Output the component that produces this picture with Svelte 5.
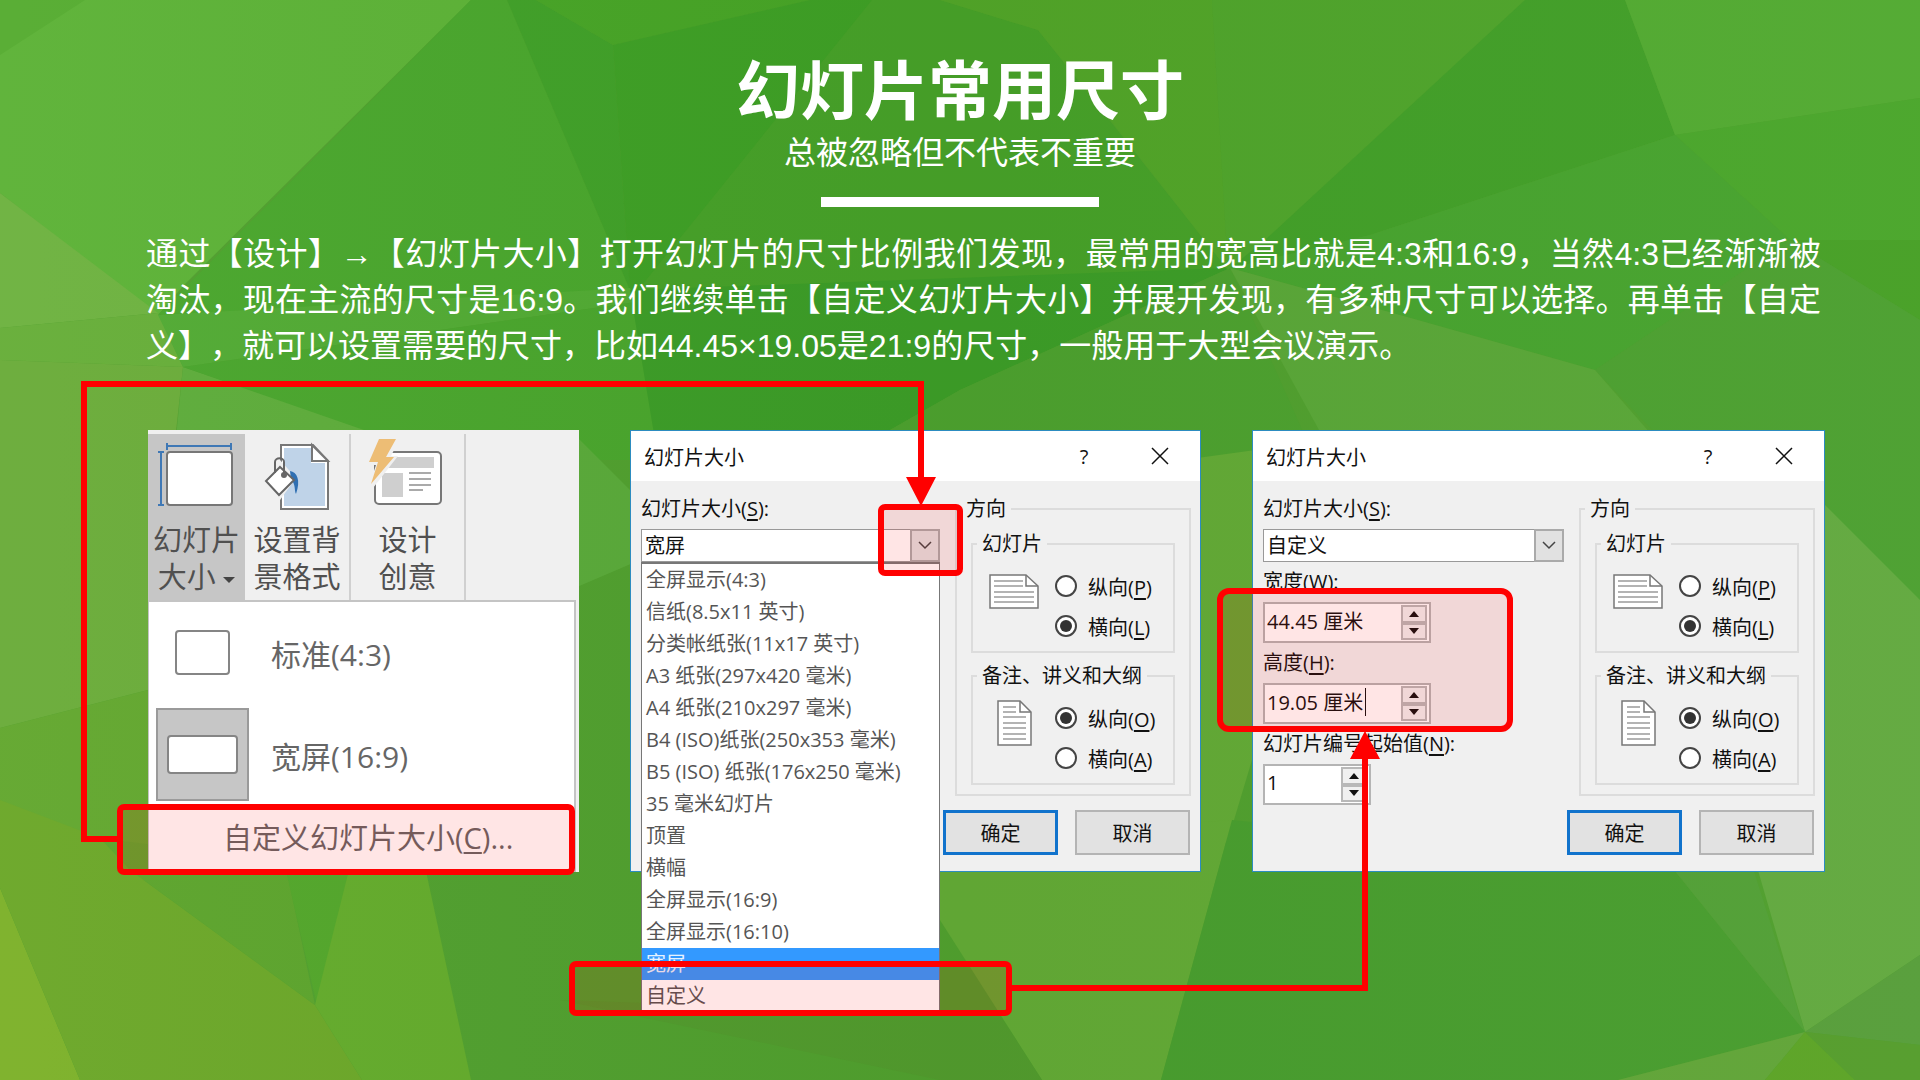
<script lang="ts">
	type Option = { name: string; text: string; key: string; checked: boolean };

	const title = '幻灯片大小';

	const sizes = [
		'全屏显示(4:3)',
		'信纸(8.5x11 英寸)',
		'分类帐纸张(11x17 英寸)',
		'A3 纸张(297x420 毫米)',
		'A4 纸张(210x297 毫米)',
		'B4 (ISO)纸张(250x353 毫米)',
		'B5 (ISO) 纸张(176x250 毫米)',
		'35 毫米幻灯片',
		'顶置',
		'横幅',
		'全屏显示(16:9)',
		'全屏显示(16:10)',
		'宽屏',
		'自定义'
	];

	const slideOptions: Option[] = [
		{ name: 'slide', text: '纵向', key: 'P', checked: false },
		{ name: 'slide', text: '横向', key: 'L', checked: true }
	];

	const notesOptions: Option[] = [
		{ name: 'notes', text: '纵向', key: 'O', checked: true },
		{ name: 'notes', text: '横向', key: 'A', checked: false }
	];

	// Low-poly backdrop, drawn in order
	const facets = [
		{ points: '0,0 471,0 184,285 158,315 0,193', fill: '#5cb236' },
		{ points: '0,0 85,0 0,55', fill: '#55ac30' },
		{ points: '0,193 158,313 0,328', fill: '#6db23f' },
		{ points: '0,328 158,313 183,367 0,360', fill: '#66ae38' },
		{ points: '0,360 183,367 148,690 0,728', fill: '#6aac39' },
		{ points: '0,728 148,690 160,880 0,888', fill: '#62a72e' },
		{ points: '183,367 400,440 430,720 148,720', fill: '#5dac3a' },
		{ points: '471,0 507,0 630,290 158,315', fill: '#49a62c' },
		{ points: '507,0 536,0 613,45 630,290', fill: '#40a028' },
		{ points: '536,0 810,0 613,45', fill: '#47a426' },
		{ points: '613,45 810,0 872,0 705,290 630,290', fill: '#3e9f25' },
		{ points: '872,0 940,0 1038,30 1228,270 630,300', fill: '#46a028' },
		{ points: '158,315 630,288 636,302 183,367', fill: '#51aa33' },
		{ points: '183,367 636,302 662,460 450,460', fill: '#49a52c' },
		{ points: '630,290 1230,268 960,390 820,470 660,470', fill: '#3c9c27' },
		{ points: '1230,268 960,390 820,470 1320,470', fill: '#4ca02e' },
		{ points: '940,0 1212,0 1228,270 1110,120 1038,30', fill: '#51a428' },
		{ points: '1212,0 1525,0 1265,240 1228,270', fill: '#4fa42b' },
		{ points: '1525,0 1625,0 1675,135 1370,235 1228,270 1265,240', fill: '#429f28' },
		{ points: '1625,0 1920,0 1920,98 1675,135', fill: '#52aa31' },
		{ points: '1675,135 1920,98 1920,240 1790,240', fill: '#4aa62b' },
		{ points: '1675,135 1790,240 1595,370 1400,315 1230,268 1370,235', fill: '#47a32e' },
		{ points: '1790,240 1920,240 1920,320', fill: '#47a026' },
		{ points: '1790,240 1920,320 1920,600 1700,480 1595,370', fill: '#4ca030' },
		{ points: '1230,268 1400,315 1595,370 1665,450 1330,450', fill: '#59a637' },
		{ points: '570,430 640,500 640,560 570,590', fill: '#59a939' },
		{ points: '1190,459 1270,448 1270,700 1228,840 1190,880', fill: '#62a935' },
		{ points: '1820,500 1920,600 1920,955 1805,1032 1755,860', fill: '#62a93f' },
		{ points: '0,888 80,1080 0,1080', fill: '#7cb129' },
		{ points: '0,800 100,838 130,870 315,1005 362,1080 80,1080 0,888', fill: '#6ba728' },
		{ points: '100,838 285,862 315,1005 130,870', fill: '#5ca42c' },
		{ points: '284,862 352,862 318,1010', fill: '#52a62a' },
		{ points: '351,862 424,862 471,1080 362,1080 315,1005', fill: '#63ab2b' },
		{ points: '940,840 1232,820 1161,1080 1042,1080 940,920', fill: '#62a935' },
		{ points: '560,1000 850,1010 1000,1015 1042,1080 940,1080', fill: '#519a2d' },
		{ points: '1232,820 1670,865 1805,1032 1618,1080 1161,1080', fill: '#489d2e' },
		{ points: '1670,865 1752,865 1805,1032', fill: '#52a036' },
		{ points: '1805,1032 1920,955 1920,1045', fill: '#579e3a' },
		{ points: '1805,1032 1618,1080 1765,1080', fill: '#61a538' },
		{ points: '1805,1032 1765,1080 1855,1080', fill: '#5ca426' },
		{ points: '1805,1032 1855,1080 1920,1080 1920,1045', fill: '#559d2c' }
	];
</script>

{#snippet mnemonic(text: string, key: string, tail: string)}{text}(<u>{key}</u>){tail}{/snippet}

{#snippet titleBar()}
	<header class="title-bar">
		<h2>{title}</h2>
		<button type="button" aria-label="帮助">?</button>
		<button type="button" aria-label="关闭">
			<svg width="18" height="18" viewBox="0 0 18 18"><path d="M1 1L17 17M17 1L1 17" stroke="#111" stroke-width="1.5" /></svg>
		</button>
	</header>
{/snippet}

{#snippet chevron()}
	<span class="chevron">
		<svg width="14" height="9" viewBox="0 0 14 9"><path d="M1 1L7 7L13 1" fill="none" stroke="#444" stroke-width="1.5" /></svg>
	</span>
{/snippet}

{#snippet spin(id: string, value: string, caret: boolean)}
	<div class="spin" class:narrow={value.length < 3}>
		<input {id} type="text" {value} />
		{#if caret}<span class="caret"></span>{/if}
		<div class="steps">
			<button type="button" aria-label="增加"><svg width="10" height="6" viewBox="0 0 10 6"><path d="M0 6L5 0L10 6Z" fill="#111" /></svg></button>
			<button type="button" aria-label="减少"><svg width="10" height="6" viewBox="0 0 10 6"><path d="M0 0L5 6L10 0Z" fill="#111" /></svg></button>
		</div>
	</div>
{/snippet}

{#snippet radios(prefix: string, options: Option[])}
	<div class="radios">
		{#each options as option}
			<label>
				<input type="radio" name="{prefix}-{option.name}" checked={option.checked} />
				<span>{@render mnemonic(option.text, option.key, '')}</span>
			</label>
		{/each}
	</div>
{/snippet}

{#snippet orientation(prefix: string)}
	<div class="side">
		<fieldset class="outer">
			<legend>方向</legend>
			<fieldset class="inner">
				<legend>幻灯片</legend>
				<div class="choice">
					<svg class="page" width="50" height="50" viewBox="0 0 50 50">
						<path d="M1 9H37L49 20V42H1Z" fill="#fff" stroke="#777" stroke-width="1.5" />
						<path d="M37 9V20H49" fill="none" stroke="#777" stroke-width="1.5" />
						<path d="M5 15H34M5 20H34M5 26H45M5 31H45M5 36H45" stroke="#9a9a9a" stroke-width="1.5" />
					</svg>
					{@render radios(prefix, slideOptions)}
				</div>
			</fieldset>
			<fieldset class="inner">
				<legend>备注、讲义和大纲</legend>
				<div class="choice">
					<svg class="page" width="50" height="50" viewBox="0 0 50 50">
						<path d="M9 3H31L42 14V47H9Z" fill="#fff" stroke="#777" stroke-width="1.5" />
						<path d="M31 3V14H42" fill="none" stroke="#777" stroke-width="1.5" />
						<path d="M14 9H27M14 14H27M14 19H37M14 25H37M14 30H37M14 36H37M14 41H37" stroke="#9a9a9a" stroke-width="1.5" />
					</svg>
					{@render radios(prefix, notesOptions)}
				</div>
			</fieldset>
		</fieldset>
		<div class="actions">
			<button type="button" class="primary">确定</button>
			<button type="button">取消</button>
		</div>
	</div>
{/snippet}

<main class="slide">
	<svg class="backdrop" viewBox="0 0 1920 1080" preserveAspectRatio="xMidYMid slice" aria-hidden="true">
		<defs>
			<linearGradient id="sheen" x1="0" y1="0" x2="1" y2="0">
				<stop offset="0" stop-color="#fff" stop-opacity="0.03" />
				<stop offset="0.5" stop-color="#000" stop-opacity="0.02" />
				<stop offset="1" stop-color="#fff" stop-opacity="0.02" />
			</linearGradient>
		</defs>
		<rect width="1920" height="1080" fill="#509f2e" />
		{#each facets as facet}
			<polygon points={facet.points} fill={facet.fill} />
		{/each}
		<rect width="1920" height="1080" fill="url(#sheen)" />
	</svg>

	<header class="heading">
		<h1>幻灯片常用尺寸</h1>
		<p>总被忽略但不代表不重要</p>
		<hr />
	</header>

	<p class="intro">
		通过【设计】→【幻灯片大小】打开幻灯片的尺寸比例我们发现，最常用的宽高比就是4:3和16:9，当然4:3已经渐渐被淘汰，现在主流的尺寸是16:9。我们继续单击【自定义幻灯片大小】并展开发现，有多种尺寸可以选择。再单击【自定义】，就可以设置需要的尺寸，比如44.45×19.05是21:9的尺寸，一般用于大型会议演示。
	</p>

	<div class="panels">
		<section class="ribbon">
			<div class="tools">
				<button type="button" class="tool active">
					<svg width="80" height="72" viewBox="0 0 80 72">
						<path d="M10 4H74M10 1V8M74 1V8M4 10V63M1 10H7M1 63H7" fill="none" stroke="#3f78b5" stroke-width="2" />
						<rect x="10" y="10" width="65" height="53" rx="3" fill="#fff" stroke="#777" stroke-width="2" />
					</svg>
					<span>幻灯片<br />大小 <svg width="12" height="6" viewBox="0 0 12 6"><path d="M0 0H12L6 6Z" fill="#444" /></svg></span>
				</button>
				<button type="button" class="tool">
					<svg width="66" height="72" viewBox="0 0 66 72">
						<path d="M17 3H49L64 19V67H17Z" fill="#fff" stroke="#777" stroke-width="2" />
						<path d="M20 6H47V21H61V64H20Z" fill="#bfd3e8" />
						<path d="M48 3V19H64Z" fill="#fff" stroke="#777" stroke-width="2" />
						<path d="M16 18L32 36L16 58L-1 40Z" fill="#f0f0f0" />
						<path d="M26 29C33 30 37 38 32 52C30 48 32 42 27 38Z" fill="#2f6fb2" />
						<path d="M16 25L30 38L15 53L2 39Z" fill="#fff" stroke="#666" stroke-width="2" />
						<path d="M11 31V20C11 15 20 15 20 20V33" fill="none" stroke="#666" stroke-width="2" />
						<circle cx="20" cy="33" r="3" fill="#666" />
					</svg>
					<span>设置背<br />景格式</span>
				</button>
				<button type="button" class="tool wide">
					<svg width="76" height="72" viewBox="0 0 76 72">
						<rect x="5" y="10" width="66" height="52" rx="4" fill="#fff" stroke="#777" stroke-width="2" />
						<path d="M22 15H64V26H16ZM12 31H33V55H12Z" fill="#cfcfcf" />
						<path d="M39 31H61M39 37H61M39 43H61M39 48H53" stroke="#aaa" stroke-width="2" />
						<path d="M6 -4H30L21 14H28L3 46L-1 44L6 23H-3Z" fill="#f0f0f0" />
						<path d="M9 -3H26L16 15H24L1 42L8 20H-1Z" fill="#edbd75" />
					</svg>
					<span>设计<br />创意</span>
				</button>
			</div>
			<ul class="menu">
				<li>
					<button type="button">
						<span class="thumb"><svg width="56" height="46" viewBox="0 0 56 46"><rect x="1" y="1" width="53" height="43" rx="3" fill="#fff" stroke="#858585" stroke-width="2" /></svg></span>
						标准(4:3)
					</button>
				</li>
				<li>
					<button type="button">
						<span class="thumb selected"><svg width="72" height="40" viewBox="0 0 72 40"><rect x="1" y="1" width="69" height="37" rx="3" fill="#fff" stroke="#858585" stroke-width="2" /></svg></span>
						宽屏(16:9)
					</button>
				</li>
				<li class="custom">
					<button type="button"><span>{@render mnemonic('自定义幻灯片大小', 'C', '...')}</span></button>
				</li>
			</ul>
		</section>

		<section class="dialog">
			{@render titleBar()}
			<div class="body">
				<div class="fields">
					<label for="size-a">{@render mnemonic(title, 'S', ':')}</label>
					<div class="combo">
						<select id="size-a"><option>宽屏</option></select>
						{@render chevron()}
						<ul class="list" role="listbox" aria-label={title}>
							{#each sizes as size}
								<li role="option" aria-selected={size === '宽屏'}>{size}</li>
							{/each}
						</ul>
					</div>
				</div>
				{@render orientation('a')}
			</div>
		</section>

		<section class="dialog">
			{@render titleBar()}
			<div class="body">
				<div class="fields">
					<label for="size-b">{@render mnemonic(title, 'S', ':')}</label>
					<div class="combo">
						<select id="size-b"><option>自定义</option></select>
						{@render chevron()}
					</div>
					<label for="width">{@render mnemonic('宽度', 'W', ':')}</label>
					{@render spin('width', '44.45 厘米', false)}
					<label for="height">{@render mnemonic('高度', 'H', ':')}</label>
					{@render spin('height', '19.05 厘米', true)}
					<label for="start">{@render mnemonic('幻灯片编号起始值', 'N', ':')}</label>
					{@render spin('start', '1', false)}
				</div>
				{@render orientation('b')}
			</div>
		</section>
	</div>

	<!-- Callouts and arrows that join the three panels -->
	<svg class="callouts" viewBox="0 0 1920 1080" preserveAspectRatio="xMidYMin meet" aria-hidden="true">
		<g fill="#f00" fill-opacity="0.1" stroke="#f00" stroke-width="6">
			<rect x="120" y="807" width="452" height="65" rx="4" />
			<rect x="881" y="507" width="79" height="66" rx="4" />
			<rect x="1220" y="591" width="290" height="138" rx="9" />
			<rect x="572" y="964" width="437" height="49" rx="4" />
		</g>
		<g fill="none" stroke="#f00" stroke-width="6">
			<path d="M118 839H84V384H921V480" />
			<path d="M1010 988H1365V756" />
		</g>
		<path d="M906 477H936L921 506ZM1350 759H1380L1365 731Z" fill="#f00" />
	</svg>
</main>

<style>
	:global(body) {
		margin: 0;
	}

	.slide {
		position: relative;
		box-sizing: border-box;
		min-height: 100vh;
		padding: 54px 95px 64px 146px;
		overflow: hidden;
		color: #fff;
		font-family: 'Liberation Sans', 'Noto Sans CJK SC', sans-serif;
	}

	.backdrop {
		position: absolute;
		inset: 0;
		width: 100%;
		height: 100%;
	}

	.callouts {
		position: absolute;
		top: 0;
		left: 0;
		z-index: 2;
		width: 100%;
		pointer-events: none;
	}

	.heading,
	.intro,
	.panels {
		position: relative;
	}

	/* Centred on the slide, not on the text column */
	.heading {
		margin: 0 -95px 0 -146px;
		text-align: center;
	}

	h1 {
		margin: 0;
		font-size: 64px;
		font-weight: 700;
		line-height: 76px;
	}

	.heading p {
		margin: 0;
		font-size: 32px;
		line-height: 46px;
	}

	hr {
		width: 278px;
		height: 10px;
		margin: 21px auto 24px;
		border: none;
		background: #fff;
	}

	.intro {
		margin: 0 4px 61px 0;
		font-size: 32px;
		line-height: 46px;
		text-align: justify;
		text-spacing-trim: space-all;
	}

	.panels {
		display: grid;
		grid-template-columns: 431fr 571fr 573fr;
		gap: 51px;
		padding-left: 2px;
		color: #111;
		font-family: 'Open Sans', 'Noto Sans CJK SC', sans-serif;
		font-size: 20px;
	}

	button,
	input,
	select {
		margin: 0;
		padding: 0;
		border: none;
		border-radius: 0;
		background: none;
		color: inherit;
		font: inherit;
	}

	ul {
		margin: 0;
		padding: 0;
		list-style: none;
	}

	u {
		text-underline-offset: 3px;
	}

	/* Ribbon */
	.ribbon {
		display: flex;
		flex-direction: column;
		box-sizing: border-box;
		padding-top: 4px;
		background: #f0f0f0;
		color: #505050;
		font-size: 29px;
	}

	.tools {
		display: flex;
		height: 166px;
	}

	.tool {
		display: flex;
		flex-direction: column;
		align-items: center;
		width: 106px;
		padding-top: 8px;
		border-right: 2px solid #d0d0d0;
		line-height: 37px;
		white-space: nowrap;
	}

	.tool.active {
		width: 97px;
		border: none;
		background: #c6c6c6;
	}

	.tool.wide {
		width: 115px;
	}

	.tool > svg {
		flex: none;
		margin-bottom: 7px;
		overflow: visible;
	}

	.tool span svg {
		vertical-align: middle;
	}

	.menu {
		flex: 1;
		margin-right: 3px;
		border: 2px solid #c4c4c4;
		border-width: 2px 2px 0 1px;
		background: #fff;
		color: #666;
		font-size: 30px;
	}

	.menu li {
		display: flex;
		padding-left: 7px;
	}

	.menu button {
		display: flex;
		align-items: center;
		gap: 22px;
	}

	.menu li:first-child button {
		height: 102px;
		margin-bottom: 4px;
	}

	.thumb {
		display: flex;
		align-items: center;
		justify-content: center;
		box-sizing: border-box;
		width: 93px;
		height: 93px;
	}

	.thumb.selected {
		border: 2px solid #9a9a9a;
		background: #c6c6c6;
	}

	.menu .custom {
		padding: 14px 0 0 74px;
		font-size: 29px;
	}

	/* Dialogs */
	.dialog {
		box-sizing: border-box;
		border: 1px solid #2c8cc0;
		background: #f0f0f0;
	}

	.title-bar {
		display: flex;
		align-items: center;
		height: 50px;
		padding: 0 30px 0 13px;
		background: #fff;
	}

	h2 {
		flex: 1;
		margin: 0;
		font-size: 20px;
		font-weight: 400;
	}

	.title-bar button {
		display: grid;
		place-items: center;
		width: 20px;
		margin-left: 56px;
	}

	.body {
		display: flex;
		gap: 15px;
		padding: 14px 9px 0 10px;
	}

	.fields {
		display: flex;
		flex: 1;
		flex-direction: column;
		gap: 6px;
	}

	.fields > label {
		line-height: 28px;
	}

	.combo {
		position: relative;
		height: 33px;
	}

	.combo select {
		appearance: none;
		box-sizing: border-box;
		width: 100%;
		height: 33px;
		padding: 0 34px 0 3px;
		border: 1px solid #999;
		background: #fff;
	}

	.chevron {
		position: absolute;
		inset: 0 0 0 auto;
		display: grid;
		place-items: center;
		box-sizing: border-box;
		width: 30px;
		border: 2px solid #aaa;
		background: #e1e1e1;
		pointer-events: none;
	}

	.list {
		position: absolute;
		top: 100%;
		left: 0;
		z-index: 1;
		box-sizing: border-box;
		width: 100%;
		border: 1px solid #777;
		border-top-width: 2px;
		border-bottom: none;
		background: #fff;
		color: #555;
	}

	.list li {
		padding-left: 4px;
		line-height: 32px;
		white-space: nowrap;
	}

	.list li[aria-selected='true'] {
		background: #3399ff;
		color: #e6f2ff;
	}

	.spin {
		position: relative;
		display: flex;
		box-sizing: border-box;
		width: 168px;
		height: 41px;
		padding: 1px 2px;
		border: 2px solid #b4b4b4;
		background: #fff;
	}

	.spin.narrow {
		width: 108px;
	}

	.spin input {
		flex: 1;
		min-width: 0;
		padding-bottom: 4px;
	}

	.caret {
		position: absolute;
		top: 3px;
		left: 100px;
		width: 1px;
		height: 28px;
		background: #111;
	}

	.steps {
		display: flex;
		flex-direction: column;
		width: 26px;
	}

	.steps button {
		display: grid;
		flex: 1;
		place-items: center;
		border: 2px solid #b8b8b8;
		background: #f0f0f0;
	}

	.side {
		width: 236px;
	}

	fieldset {
		min-width: 0;
		margin: 0;
		padding: 0;
		border: 2px solid #dcdcdc;
	}

	legend {
		margin-left: 4px;
		padding: 0 5px;
		line-height: 28px;
	}

	.outer {
		padding: 7px 0 9px;
	}

	.inner {
		margin: 0 14px;
	}

	.inner + .inner {
		margin-top: 9px;
	}

	.choice {
		display: flex;
		padding: 8px 0 5px;
	}

	.page {
		flex: none;
		margin: 0 16px;
	}

	.radios label {
		display: flex;
		align-items: center;
		gap: 11px;
		height: 40px;
		white-space: nowrap;
	}

	.radios input {
		display: grid;
		flex: none;
		place-items: center;
		appearance: none;
		box-sizing: border-box;
		width: 22px;
		height: 22px;
		border: 2px solid #444;
		border-radius: 50%;
		background: #fff;
	}

	.radios input:checked::after {
		content: '';
		width: 12px;
		height: 12px;
		border-radius: 50%;
		background: #333;
	}

	/* Wider than the group above it, so it grows to the left */
	.actions {
		display: flex;
		justify-content: flex-end;
		gap: 17px;
		padding: 14px 1px 16px 0;
	}

	.actions button {
		flex: none;
		box-sizing: border-box;
		width: 115px;
		height: 45px;
		border: 2px solid #b4b4b4;
		background: #e2e2e2;
	}

	.actions .primary {
		border: 3px solid #1173cc;
	}
</style>
